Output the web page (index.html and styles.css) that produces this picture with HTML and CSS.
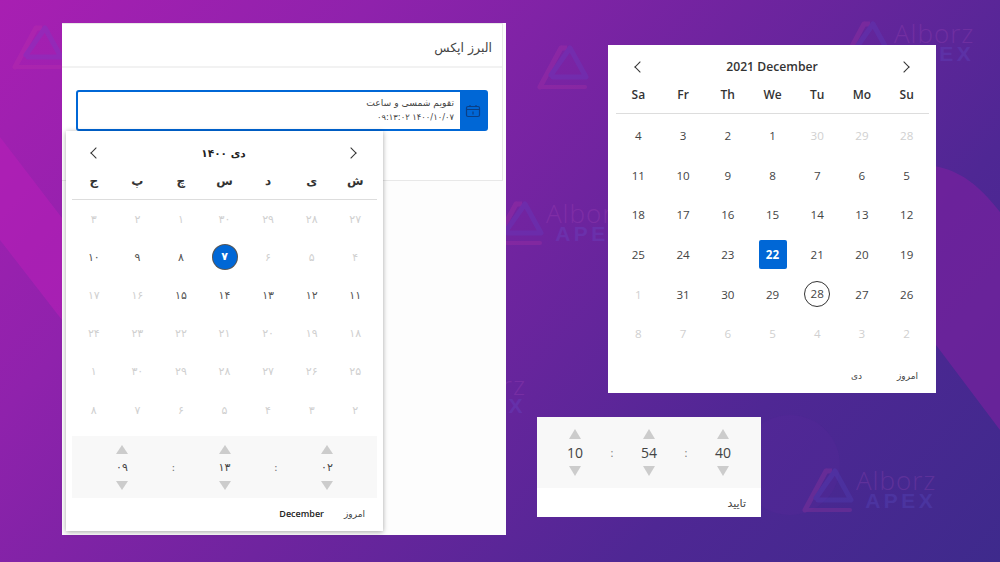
FILE: index.html
```html
<!DOCTYPE html>
<html lang="en">
<head>
    <meta charset="UTF-8">
    <title>Alborz Apex date picker</title>
    <link rel="stylesheet" href="styles.css">
</head>
<body>
    <!-- background shapes -->
    <svg class="bgShapes" width="1000" height="562" viewBox="0 0 1000 562">
        <path d="M0 137 L62 218 V320 L0 240 Z" fill="#b81fb8" fill-opacity="0.55"/>
        <path d="M900 165 C950 160 975 180 1000 212 V430 L936 345 L900 300 Z" fill="#7e1fa0" fill-opacity="0.6"/>
        <circle cx="790" cy="465" r="50" fill="#6a2aa8" fill-opacity="0.12"/>
        <symbol id="apexLogo" viewBox="0 0 52 46">
            <path d="M3 43 L24 4" fill="none" stroke="#d23ea6" stroke-width="5" stroke-linecap="round"/>
            <path d="M24 4 L30 4" fill="none" stroke="#d23ea6" stroke-width="5"/>
            <path d="M14 31 L33 4 L49 33 H16" fill="none" stroke="#5a55dc" stroke-width="5" stroke-linecap="round" stroke-linejoin="round"/>
            <path d="M3 43 H48" fill="none" stroke="#d23ea6" stroke-width="4" stroke-linecap="round"/>
        </symbol>
    </svg>

    <!-- watermarks -->
    <div class="mark mark1"><svg class="markLogo"><use href="#apexLogo"/></svg></div>
    <div class="mark mark2"><svg class="markLogo"><use href="#apexLogo"/></svg></div>
    <div class="mark mark3"><svg class="markLogo"><use href="#apexLogo"/></svg><div class="markText"><span>Alborz</span><b>APEX</b></div></div>
    <div class="mark mark4"><svg class="markLogo"><use href="#apexLogo"/></svg><div class="markText"><span>Alborz</span><b>APEX</b></div></div>
    <div class="mark mark5"><div class="markText"><span>Alborz</span><b>APEX</b></div></div>
    <div class="mark mark6"><svg class="markLogo"><use href="#apexLogo"/></svg><div class="markText"><span>Alborz</span><b>APEX</b></div></div>

    <!-- form window -->
    <div class="window formWindow">
        <div class="card">
            <div class="cardTitle" dir="rtl">البرز اپکس</div>
            <div class="cardBody">
                <div class="dateField">
                    <div class="dateValue" dir="rtl">
                        <div>تقویم شمسی و ساعت</div>
                        <div class="dateLine">۱۴۰۰/۱۰/۰۷ ۰۹:۱۳:۰۲</div>
                    </div>
                    <div class="dateBtn">
                        <svg width="16" height="14" viewBox="0 0 16 14" fill="none" stroke="#0a3f86" stroke-width="1.2">
                            <rect x="1.5" y="2.5" width="13" height="10" rx="1.5"/>
                            <path d="M1.5 5.5 H14.5 M5 1 V3 M11 1 V3 M8 7.5 V10.5"/>
                        </svg>
                    </div>
                </div>
            </div>
        </div>

        <div class="picker popup">
            <div class="pickerHead">
                <span class="chev chevLeft"></span>
                <span class="pickerTitle" dir="rtl">دی ۱۴۰۰</span>
                <span class="chev chevRight"></span>
            </div>
            <div class="weekdays fa" dir="rtl">
                <span>ش</span><span>ی</span><span>د</span><span>س</span><span>چ</span><span>پ</span><span>ج</span>
            </div>
            <div class="days fa" dir="rtl">
                <span class="off">۲۷</span><span class="off">۲۸</span><span class="off">۲۹</span><span class="off">۳۰</span><span class="off">۱</span><span class="off">۲</span><span class="off">۳</span>
                <span class="off">۴</span><span class="off">۵</span><span class="off">۶</span><span><i class="picked">۷</i></span><span>۸</span><span>۹</span><span>۱۰</span>
                <span>۱۱</span><span>۱۲</span><span>۱۳</span><span>۱۴</span><span>۱۵</span><span class="off">۱۶</span><span class="off">۱۷</span>
                <span class="off">۱۸</span><span class="off">۱۹</span><span class="off">۲۰</span><span class="off">۲۱</span><span class="off">۲۲</span><span class="off">۲۳</span><span class="off">۲۴</span>
                <span class="off">۲۵</span><span class="off">۲۶</span><span class="off">۲۷</span><span class="off">۲۸</span><span class="off">۲۹</span><span class="off">۳۰</span><span class="off">۱</span>
                <span class="off">۲</span><span class="off">۳</span><span class="off">۴</span><span class="off">۵</span><span class="off">۶</span><span class="off">۷</span><span class="off">۸</span>
            </div>
            <div class="timeBox">
                <div class="timeCol"><span class="up"></span><span class="num">۰۹</span><span class="down"></span></div>
                <span class="colon">:</span>
                <div class="timeCol"><span class="up"></span><span class="num">۱۳</span><span class="down"></span></div>
                <span class="colon">:</span>
                <div class="timeCol"><span class="up"></span><span class="num">۰۲</span><span class="down"></span></div>
            </div>
            <div class="pickerFoot" dir="rtl">
                <span class="today">امروز</span>
                <span class="month">December</span>
            </div>
        </div>
    </div>

    <!-- gregorian window -->
    <div class="window gregWindow">
        <div class="picker wide">
            <div class="pickerHead">
                <span class="chev chevLeft"></span>
                <span class="pickerTitle">2021 December</span>
                <span class="chev chevRight"></span>
            </div>
            <div class="weekdays" dir="rtl">
                <span>Su</span><span>Mo</span><span>Tu</span><span>We</span><span>Th</span><span>Fr</span><span>Sa</span>
            </div>
            <div class="days" dir="rtl">
                <span class="off">28</span><span class="off">29</span><span class="off">30</span><span>1</span><span>2</span><span>3</span><span>4</span>
                <span>5</span><span>6</span><span>7</span><span>8</span><span>9</span><span>10</span><span>11</span>
                <span>12</span><span>13</span><span>14</span><span>15</span><span>16</span><span>17</span><span>18</span>
                <span>19</span><span>20</span><span>21</span><span><i class="square">22</i></span><span>23</span><span>24</span><span>25</span>
                <span>26</span><span>27</span><span><i class="ring">28</i></span><span>29</span><span>30</span><span>31</span><span class="off">1</span>
                <span class="off">2</span><span class="off">3</span><span class="off">4</span><span class="off">5</span><span class="off">6</span><span class="off">7</span><span class="off">8</span>
            </div>
            <div class="pickerFoot" dir="rtl">
                <span class="today">امروز</span>
                <span class="today">دی</span>
            </div>
        </div>
    </div>

    <!-- time window -->
    <div class="window timeWindow">
        <div class="timeBox">
            <div class="timeCol"><span class="up"></span><span class="num">10</span><span class="down"></span></div>
            <span class="colon">:</span>
            <div class="timeCol"><span class="up"></span><span class="num">54</span><span class="down"></span></div>
            <span class="colon">:</span>
            <div class="timeCol"><span class="up"></span><span class="num">40</span><span class="down"></span></div>
        </div>
        <div class="timeFoot" dir="rtl">تایید</div>
    </div>
</body>
</html>
```

FILE: styles.css
```css
body {
    margin: 0;
    width: 1000px;
    height: 562px;
    overflow: hidden;
    position: relative;
    font-family: "Open Sans", "DejaVu Sans", sans-serif;
    color: #333;
    background: linear-gradient(132deg, #a81fb2 0%, #8f22ac 25%, #6f249f 50%, #4f2794 75%, #3e2a8c 100%);
}

.bgShapes {
    position: absolute;
    left: 0;
    top: 0;
}

/* watermarks */
.mark {
    position: absolute;
    display: flex;
    align-items: center;
    gap: 2px;
    opacity: 0.18;
}

.markLogo {
    width: 52px;
    height: 46px;
    flex: none;
}

.markText {
    display: flex;
    flex-direction: column;
    align-items: flex-end;
    flex: none;
    color: #c85ac8;
}

.markText span {
    font-family: "Open Sans", sans-serif;
    font-weight: 300;
    font-size: 26px;
    line-height: 21px;
    letter-spacing: 1px;
}

.markText b {
    font-family: "Liberation Sans", sans-serif;
    font-size: 21px;
    line-height: 19px;
    letter-spacing: 3.5px;
    color: #6a66e8;
}

.mark1 { left: 12px; top: 24px; }
.mark2 { left: 537px; top: 44px; }
.mark3 { left: 492px; top: 200px; width: 116px; overflow: hidden; }
.mark4 { left: 802px; top: 467px; }
.mark5 { left: 506px; top: 375px; width: 20px; justify-content: flex-end; overflow: hidden; }
.mark6 { left: 840px; top: 20px; }

/* windows */
.window {
    position: absolute;
    background: #fff;
}

.formWindow {
    left: 62px;
    top: 23px;
    width: 444px;
    height: 512px;
    background: #fdfdfd;
}

.gregWindow {
    left: 608px;
    top: 45px;
    width: 328px;
    height: 348px;
}

.timeWindow {
    left: 537px;
    top: 417px;
    width: 224px;
    height: 100px;
}

/* form card */
.card {
    width: 441px;
    height: 158px;
    background: #fff;
    border-right: 1px solid #e8e8e8;
    border-bottom: 1px solid #e8e8e8;
    border-top: 1px solid #e8e8e8;
    box-sizing: border-box;
}

.cardTitle {
    height: 42px;
    padding-right: 10px;
    font-size: 12.5px;
    line-height: 47px;
    font-family: "DejaVu Sans", sans-serif;
    border-bottom: 2px solid #f2f2f2;
    color: #444;
}

.cardBody {
    padding: 22px 14px 0;
}

.dateField {
    display: flex;
    height: 41px;
    box-sizing: border-box;
    border: 2px solid #0067d6;
    border-radius: 3px;
    background: #fff;
}

.dateValue {
    flex: 1;
    font-family: "DejaVu Sans", sans-serif;
    font-size: 9.2px;
    line-height: 15px;
    padding: 3px 6px 0 0;
    color: #444;
}

.dateLine {
    font-size: 8.4px;
}

.dateBtn {
    width: 26px;
    background: #0067d6;
    display: flex;
    align-items: center;
    justify-content: center;
}

/* calendars */
.picker {
    background: #fff;
    display: flex;
    flex-direction: column;
}

.popup {
    position: absolute;
    left: 4px;
    top: 108px;
    width: 317px;
    height: 400px;
    padding: 0 6px;
    box-sizing: border-box;
    box-shadow: 0 1px 5px rgba(0, 0, 0, 0.35);
}

.wide {
    height: 100%;
    padding: 0 7px 0 8px;
    box-sizing: border-box;
}

.pickerHead {
    display: flex;
    align-items: center;
    justify-content: space-between;
    height: 43px;
    padding: 0 22px 0 20px;
    flex: none;
}

.wide .pickerHead {
    padding: 0 21px 0 20px;
}

.pickerTitle {
    font-size: 12.2px;
    font-weight: 600;
}

.popup .pickerTitle {
    font-family: "DejaVu Sans", sans-serif;
    font-size: 10.5px;
    font-weight: bold;
    color: #222;
}

.chev {
    width: 7px;
    height: 7px;
    border-top: 1.8px solid #333;
    border-left: 1.8px solid #333;
}

.chevLeft { transform: rotate(-45deg); }
.chevRight { transform: rotate(135deg); }

.weekdays {
    display: grid;
    grid-template-columns: repeat(7, 1fr);
    height: 25px;
    border-bottom: 1px solid #ddd;
    text-align: center;
    font-size: 12px;
    font-weight: 600;
    line-height: 15px;
    flex: none;
}

.wide .weekdays {
    line-height: 14px;
}

.days {
    display: grid;
    grid-template-columns: repeat(7, 1fr);
    grid-auto-rows: 38.2px;
    text-align: center;
    font-size: 11.6px;
    align-items: center;
    color: #444;
}

.wide .days {
    grid-auto-rows: 39.6px;
    padding-top: 2px;
}

.fa {
    font-family: "DejaVu Sans", sans-serif;
}

.days.fa {
    font-size: 11px;
    color: #555;
}

.days .off {
    color: #d0d0d0;
}

.days i {
    font-style: normal;
    display: inline-block;
    text-align: center;
}

.picked {
    width: 24px;
    height: 24px;
    line-height: 24px;
    border-radius: 50%;
    background: #0067d6;
    color: #fff;
    font-weight: bold;
    box-shadow: 0 0 0 1px #555;
}

.square {
    width: 28px;
    height: 29px;
    line-height: 29px;
    border-radius: 2px;
    background: #0067d6;
    color: #fff;
    font-weight: bold;
}

.ring {
    width: 24px;
    height: 24px;
    line-height: 24px;
    border: 1px solid #333;
    border-radius: 50%;
}

.timeBox {
    display: flex;
    justify-content: space-between;
    align-items: center;
    background: #f8f8f8;
}

.popup .timeBox {
    height: 62px;
    margin-top: 7px;
    padding: 0 40px;
    font-family: "DejaVu Sans", sans-serif;
}

.timeWindow .timeBox {
    height: 71px;
    padding: 0 28px;
}

.timeCol {
    display: flex;
    flex-direction: column;
    align-items: center;
    gap: 6px;
    width: 20px;
    font-size: 11px;
}

.timeWindow .timeCol {
    font-size: 14px;
    gap: 6px;
}

.num {
    line-height: 15px;
    color: #444;
}

.up, .down {
    width: 0;
    height: 0;
    border-left: 6px solid transparent;
    border-right: 6px solid transparent;
}

.up { border-bottom: 9px solid #ccc; }
.down { border-top: 9px solid #ccc; }

.timeWindow .up { border-bottom-width: 10px; }
.timeWindow .down { border-top-width: 10px; }

.colon {
    font-size: 11px;
    color: #777;
}

.pickerFoot {
    display: flex;
    align-items: center;
    gap: 20px;
    padding: 0 12px;
    height: 31px;
    font-family: "DejaVu Sans", sans-serif;
    font-size: 9px;
}

.wide .pickerFoot {
    margin-top: 5px;
    height: 36px;
    gap: 35px;
    padding: 0 11px;
}

.month {
    font-family: "Open Sans", sans-serif;
    font-weight: 600;
    color: #222;
}

.today {
    color: #444;
}

.timeFoot {
    height: 29px;
    line-height: 31px;
    padding-right: 15px;
    font-size: 11px;
    font-family: "DejaVu Sans", sans-serif;
    color: #444;
}
```
